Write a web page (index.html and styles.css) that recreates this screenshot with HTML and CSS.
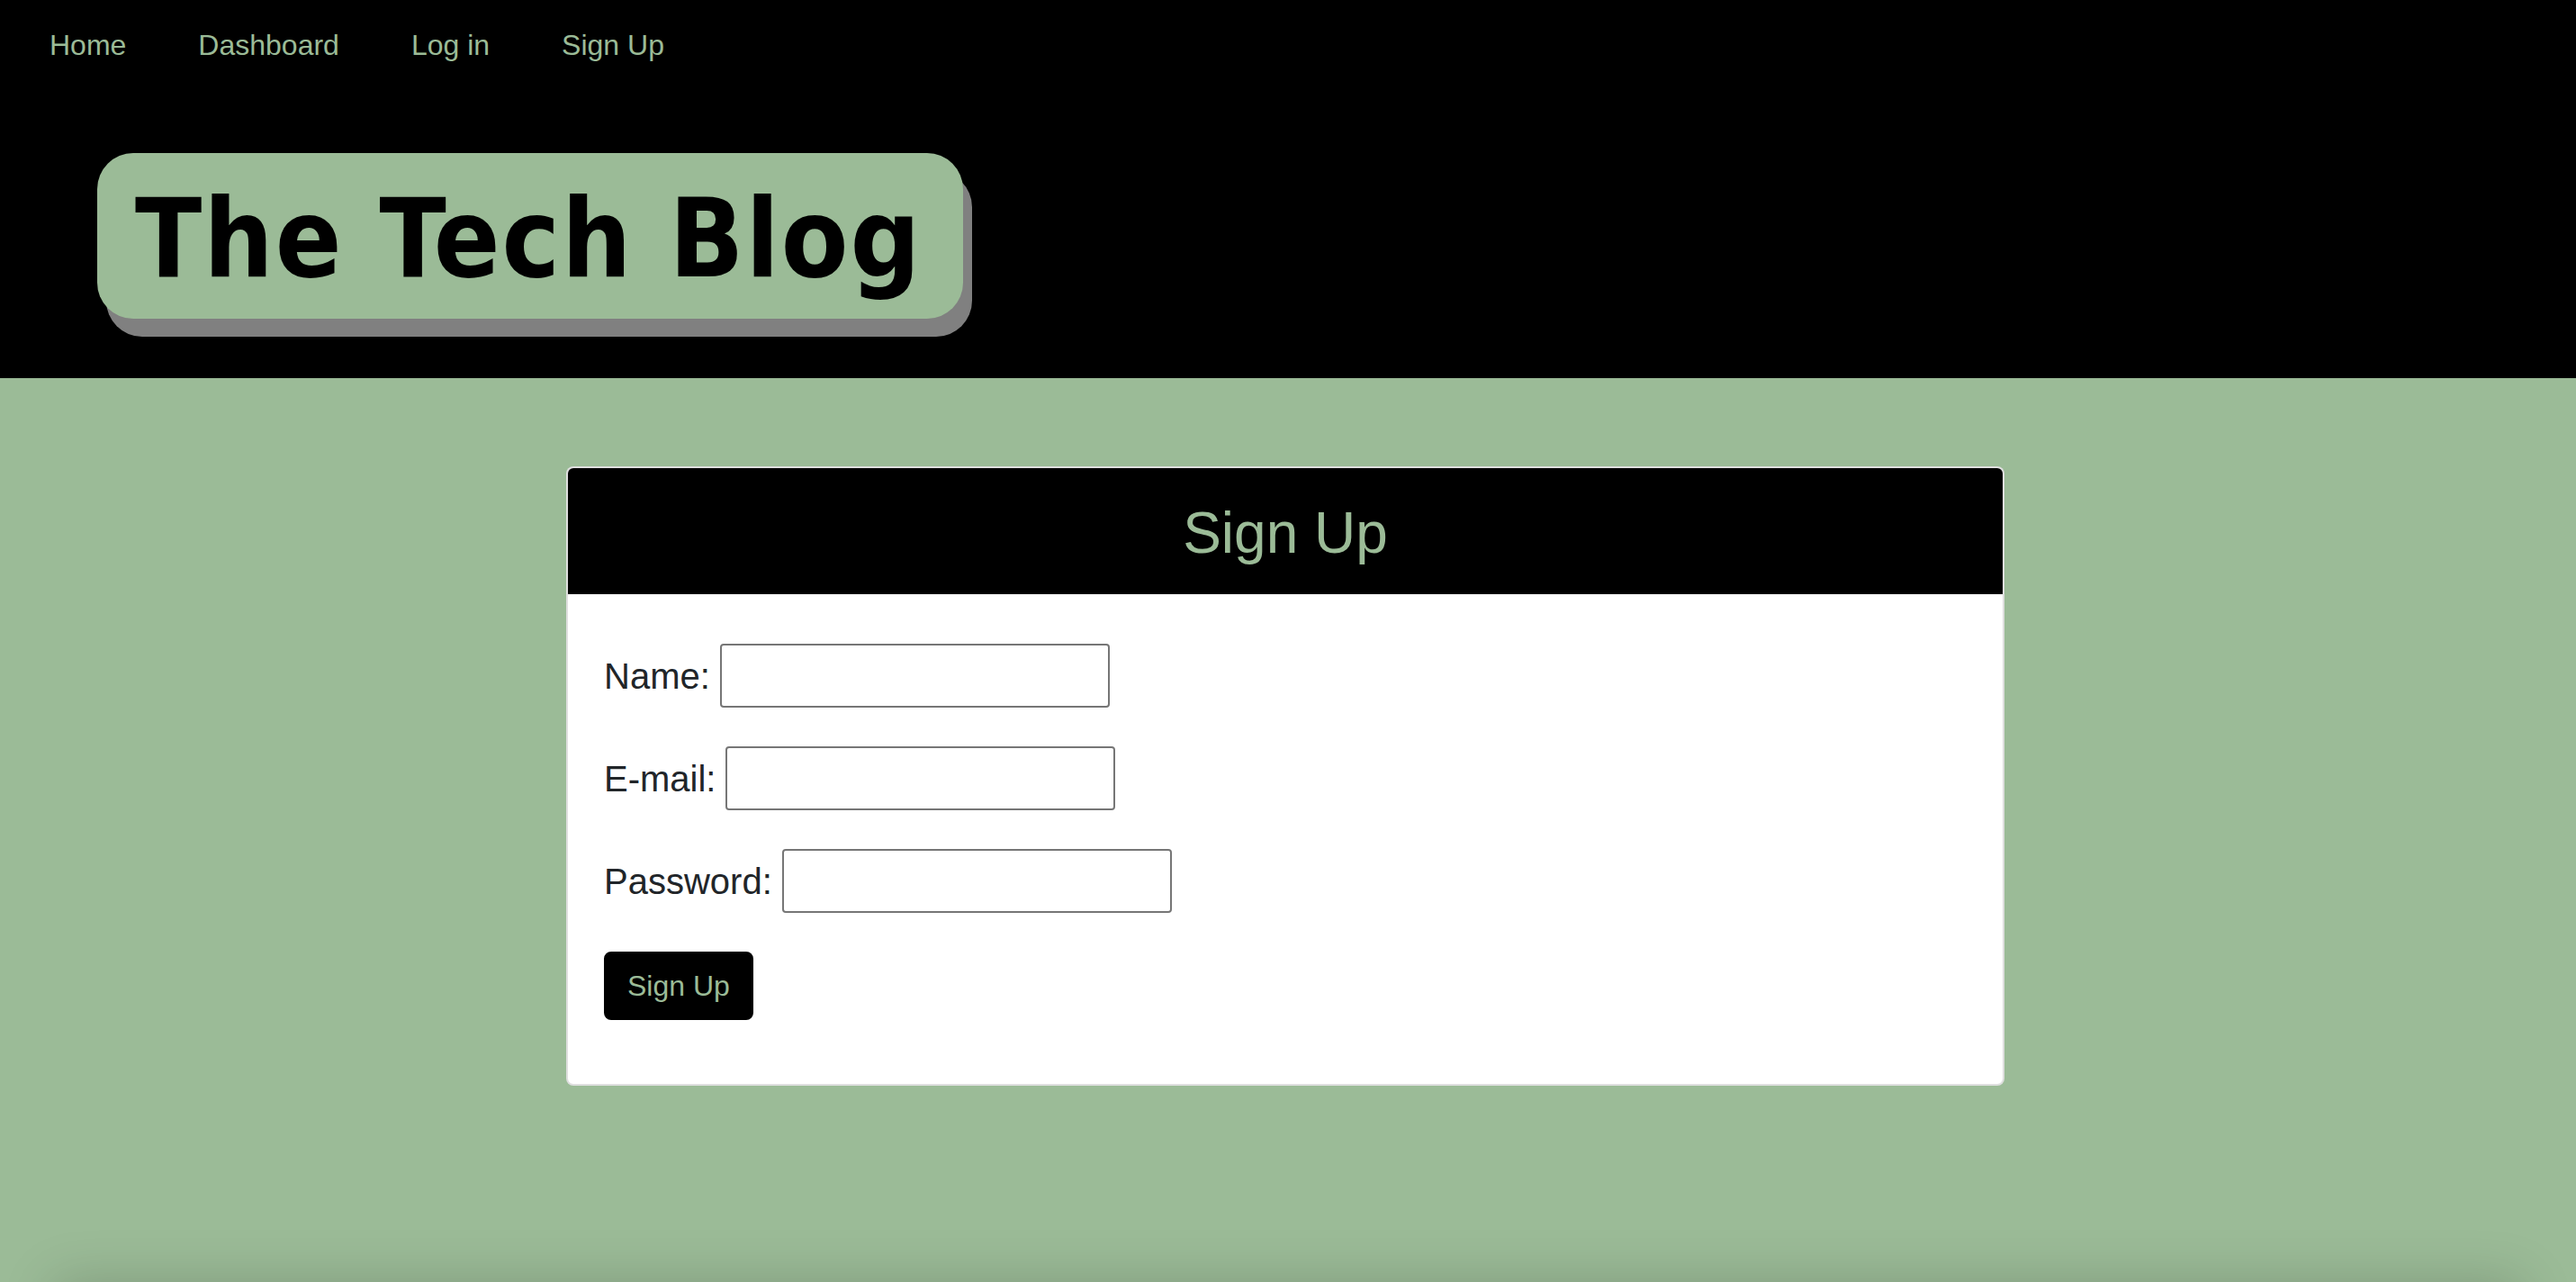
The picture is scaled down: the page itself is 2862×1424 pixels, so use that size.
FILE: index.html
```html
<!DOCTYPE html>
<html lang="en">
<head>
<meta charset="utf-8">
<title>The Tech Blog</title>
<link rel="stylesheet" href="styles.css">
</head>
<body>
<header class="site-header">
  <nav class="nav">
    <a class="nav-link" href="#">Home</a>
    <a class="nav-link" href="#">Dashboard</a>
    <a class="nav-link" href="#">Log in</a>
    <a class="nav-link" href="#">Sign Up</a>
  </nav>
  <div class="brand-wrap">
    <h1 class="brand">The Tech Blog</h1>
  </div>
</header>
<main class="main">
  <section class="card">
    <div class="card-header">
      <h2 class="card-title">Sign Up</h2>
    </div>
    <form class="card-body">
      <div class="form-row">
        <label class="form-label" for="name">Name:</label>
        <input class="form-input" id="name" type="text">
      </div>
      <div class="form-row">
        <label class="form-label" for="email">E-mail:</label>
        <input class="form-input" id="email" type="email">
      </div>
      <div class="form-row">
        <label class="form-label" for="password">Password:</label>
        <input class="form-input" id="password" type="password">
      </div>
      <div class="form-row">
        <button class="btn" type="submit">Sign Up</button>
      </div>
    </form>
  </section>
</main>
<footer class="footer"></footer>
</body>
</html>
```

FILE: styles.css
```css
* {
  box-sizing: border-box;
}

html, body {
  margin: 0;
  padding: 0;
}

body {
  background: #9bbb97;
  font-family: "Liberation Sans", Arial, sans-serif;
  color: #212529;
}

.site-header {
  background: #000;
  height: 420px;
  padding-top: 26px;
}

.nav {
  display: flex;
  padding-left: 15px;
}

.nav-link {
  color: #9bbb97;
  text-decoration: none;
  font-size: 32px;
  line-height: 48px;
  padding: 0 40px;
}

.brand-wrap {
  padding-left: 108px;
  margin-top: 96px;
}

.brand {
  display: inline-block;
  margin: 0;
  background: #9bbb97;
  color: #000;
  border-radius: 40px;
  box-shadow: 10px 20px 0 #808080;
  font-family: "DejaVu Sans Condensed", "DejaVu Sans", sans-serif;
  font-stretch: condensed;
  font-weight: bold;
  font-size: 121px;
  letter-spacing: 2px;
  line-height: 120px;
  height: 184px;
  padding: 36px 46px 28px 42px;
  white-space: nowrap;
}

.main {
  min-height: 1004px;
  padding-top: 98px;
  padding-right: 6px;
}

.card {
  width: 1598px;
  margin: 0 auto;
  background: #fff;
  border: 2px solid rgba(0, 0, 0, 0.125);
  border-radius: 8px;
  overflow: hidden;
}

.card-header {
  background: #000;
  padding: 34px 0 29px;
  text-align: center;
}

.card-title {
  margin: 0;
  color: #9bbb97;
  font-weight: normal;
  font-size: 64px;
  line-height: 77px;
}

.card-body {
  padding: 55px 40px 71px;
}

.form-row {
  display: flex;
  align-items: center;
  margin-bottom: 43px;
}

.form-row:last-child {
  margin-bottom: 0;
}

.form-label {
  font-size: 40px;
  line-height: 48px;
  margin-right: 11px;
}

.form-input {
  width: 433px;
  height: 71px;
  border: 2px solid #767676;
  border-radius: 4px;
  background: #fff;
  font-size: 32px;
  padding: 2px 8px;
}

.btn {
  background: #000;
  color: #9bbb97;
  border: 2px solid #000;
  border-radius: 8px;
  font-family: "Liberation Sans", Arial, sans-serif;
  font-size: 32px;
  line-height: 48px;
  padding: 12px 24px;
  height: 76px;
  cursor: pointer;
}

.footer {
  height: 120px;
  margin: 0 60px;
  background: #9bbb97;
  box-shadow: 0 0 60px rgba(0, 0, 0, 0.18);
}
```
